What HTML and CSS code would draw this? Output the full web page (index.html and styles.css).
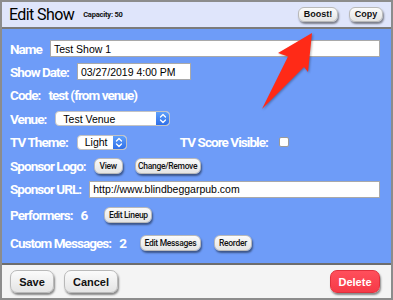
FILE: index.html
```html
<!DOCTYPE html>
<html>
<head>
<meta charset="utf-8">
<link rel="stylesheet" href="styles.css">
</head>
<body>
<div class="frame">
  <header class="head">
    <h1 class="title">Edit Show</h1>
    <span class="cap">Capacity: 50</span>
    <div class="head-actions">
      <button class="btn btn-md boost">Boost!</button>
      <button class="btn btn-md copy">Copy</button>
    </div>
  </header>
  <main class="form">
    <div class="row">
      <span class="lbl">Name</span>
      <div class="input grow">Test Show 1</div>
    </div>
    <div class="row">
      <span class="lbl">Show Date:</span>
      <div class="input date">03/27/2019 4:00 PM</div>
    </div>
    <div class="row r24">
      <span class="lbl">Code:</span>
      <span class="lbl val">test (from venue)</span>
    </div>
    <div class="row">
      <span class="lbl">Venue:</span>
      <div class="select venue"><span class="sel-text">Test Venue</span><span class="stepper"><svg width="8" height="11" viewBox="0 0 8 11"><path d="M1.5 4 L4 1.5 L6.5 4 M1.5 7 L4 9.5 L6.5 7" fill="none" stroke="#fff" stroke-width="1.3" stroke-linecap="round" stroke-linejoin="round"/></svg></span></div>
    </div>
    <div class="row r24">
      <span class="lbl">TV Theme:</span>
      <div class="select theme"><span class="sel-text">Light</span><span class="stepper"><svg width="8" height="11" viewBox="0 0 8 11"><path d="M1.5 4 L4 1.5 L6.5 4 M1.5 7 L4 9.5 L6.5 7" fill="none" stroke="#fff" stroke-width="1.3" stroke-linecap="round" stroke-linejoin="round"/></svg></span></div>
      <span class="lbl score">TV Score Visible:</span>
      <span class="check"></span>
    </div>
    <div class="row">
      <span class="lbl">Sponsor Logo:</span>
      <button class="btn btn-sm view">View</button>
      <button class="btn btn-sm change">Change/Remove</button>
    </div>
    <div class="row r24">
      <span class="lbl">Sponsor URL:</span>
      <div class="input grow">http://www.blindbeggarpub.com</div>
    </div>
    <div class="row r28">
      <span class="lbl">Performers:</span>
      <span class="lbl val">6</span>
      <button class="btn btn-sm lineup">Edit Lineup</button>
    </div>
    <div class="row r28">
      <span class="lbl">Custom Messages:</span>
      <span class="lbl val">2</span>
      <button class="btn btn-sm msgs">Edit Messages</button>
      <button class="btn btn-sm reorder">Reorder</button>
    </div>
  </main>
  <footer class="foot">
    <button class="btn btn-lg">Save</button>
    <button class="btn btn-lg cancel">Cancel</button>
    <button class="btn btn-lg danger">Delete</button>
  </footer>
  <svg class="arrow" width="70" height="90" viewBox="250 25 70 90">
    <polygon points="312,33 278,53 288,56.5 262,109 304,67 308,72" fill="#ff2a17"/>
  </svg>
</div>
</body>
</html>
```

FILE: styles.css
```css
* { box-sizing: border-box; }
html, body { margin: 0; padding: 0; }
body { width: 393px; height: 300px; overflow: hidden; background: #fff; }

.frame {
  position: relative;
  width: 393px;
  height: 300px;
  border: 2px solid #8c8c8c;
  display: flex;
  flex-direction: column;
  font-family: "Roboto", sans-serif;
}

.head {
  height: 27px;
  flex: none;
  background: #dfe5fb;
  border-bottom: 2px solid #7b7b7b;
  display: flex;
  align-items: center;
  padding: 0 8px 0 7px;
}
.title {
  margin: 0;
  font-size: 16px;
  font-weight: 400;
  letter-spacing: -0.6px;
  color: #000;
}
.cap {
  margin-left: 9px;
  font-size: 7.5px;
  font-weight: 700;
  letter-spacing: -0.2px;
  color: #111;
}
.head-actions {
  margin-left: auto;
  display: flex;
  gap: 11px;
  margin-top: -1px;
}

.btn {
  font-family: "Liberation Sans", Arial, sans-serif;
  font-weight: 700;
  color: #111;
  background: linear-gradient(#fbfbfb, #e4e4e4);
  border: 1px solid #b9b9b9;
  border-radius: 6px;
  box-shadow: 1px 2px 2px rgba(0, 0, 0, 0.45);
  padding: 0;
  display: inline-flex;
  align-items: center;
  justify-content: center;
}
.btn-md { height: 15px; font-size: 9px; }
.boost { width: 40px; }
.copy { width: 34px; }

.btn-sm {
  font-family: "Roboto", sans-serif;
  font-weight: 500;
  font-size: 8.5px;
  letter-spacing: -0.3px;
  height: 16px;
  padding: 0;
  margin-left: 0;
}
.view { width: 29px; }
.change { width: 66px; margin-left: 12px; }
.lineup { width: 48px; margin-left: 9px; }
.msgs { width: 61px; margin-left: 6px; }
.reorder { width: 38px; margin-left: 13px; }

.form {
  flex: 1;
  background: #6e9cf8;
  border-bottom: 2px solid #6d6d6d;
  padding: 8px 11px 0 8px;
  display: flex;
  flex-direction: column;
}
.row {
  height: 23px;
  display: flex;
  align-items: center;
}
.r24 { height: 24px; }
.r28 { height: 28px; }

.lbl {
  color: #fff;
  font-size: 13.5px;
  font-weight: 700;
  letter-spacing: -0.95px;
  white-space: nowrap;
  margin-right: 8px;
}
.val { margin-left: 0; }
.score { margin-left: 53px; }

.input {
  height: 17px;
  background: #fff;
  border: 1px solid #a9a9a9;
  font-family: "Liberation Sans", Arial, sans-serif;
  font-size: 10.5px;
  color: #000;
  padding: 0 3px;
  display: flex;
  align-items: center;
  white-space: nowrap;
}
.grow { flex: 1; }
.date { width: 114px; }

.select {
  height: 15px;
  background: #fff;
  border: 1px solid #c3c3c3;
  border-radius: 4px;
  display: flex;
  align-items: center;
  overflow: hidden;
  margin-left: 1px;
}
.venue { width: 115px; }
.theme { width: 50px; }
.sel-text {
  flex: 1;
  font-family: "Liberation Sans", Arial, sans-serif;
  font-size: 10.5px;
  color: #000;
  padding-left: 7px;
}
.stepper {
  width: 13px;
  height: 100%;
  background: linear-gradient(#5fa0fb, #2f6fe9);
  border-radius: 0 3px 3px 0;
  display: flex;
  align-items: center;
  justify-content: center;
}

.check {
  width: 10px;
  height: 10px;
  background: #fff;
  border: 1px solid #9a9a9a;
  border-radius: 2px;
  margin-left: 3px;
}

.foot {
  height: 33px;
  flex: none;
  background: #f4f4f4;
  display: flex;
  align-items: center;
  padding: 0 11px 0 8px;
}
.btn-lg {
  height: 23px;
  font-size: 11px;
  border-radius: 7px;
}
.btn-lg:first-child { width: 44px; }
.cancel { width: 54px; margin-left: 10px; }
.danger {
  width: 50px;
  margin-left: auto;
  background: linear-gradient(#ff4f5c, #f63a47);
  border-color: #e0303c;
  color: #fff;
}

.arrow {
  position: absolute;
  left: 248px;
  top: 23px;
  filter: drop-shadow(1px 1px 1px rgba(0, 0, 0, 0.3));
}
```
